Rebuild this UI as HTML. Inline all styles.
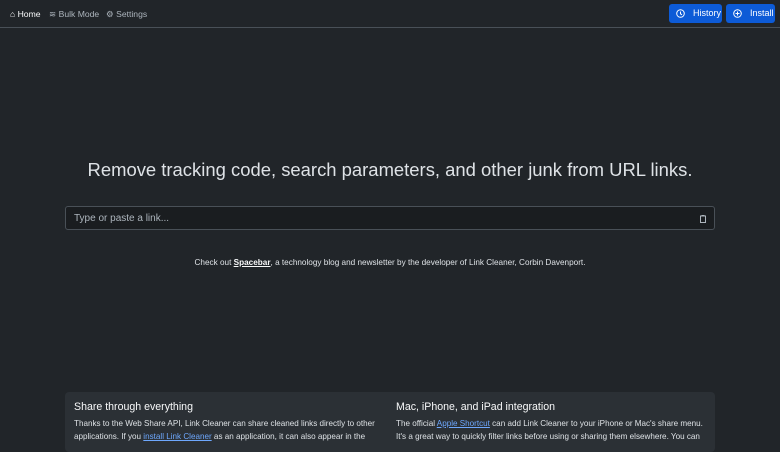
<!DOCTYPE html>
<html><head><meta charset="utf-8"><style>
*{box-sizing:border-box;margin:0;padding:0}
body{width:780px;height:438px;overflow:hidden;background:#212529;color:#dee2e6;font-family:"Liberation Sans",sans-serif;position:relative}
.nav{height:28px;border-bottom:1px solid #495057;background:#212529;position:relative}
.nav span{position:absolute;top:9px;font-size:8.6px;color:#adb5bd}
.btn{position:absolute;top:4px;height:19px;background:#0d5bd7;border-radius:3px;color:#fff;font-size:9px;line-height:19px;padding-left:24px}
.btn svg{position:absolute;left:7px;top:5px}
h1{position:absolute;top:159px;left:0;width:780px;text-align:center;font-weight:400;font-size:18.45px;color:#dee2e6}
.inp{position:absolute;left:65px;top:206px;width:650px;height:24px;background:#1a1d20;border:1px solid #495057;border-radius:3px;font-size:10px;color:#adb5bd;padding:6px 8px}
.note{position:absolute;top:258px;width:780px;text-align:center;font-size:8.2px;color:#dee2e6}
.card{position:absolute;left:65px;top:392px;width:650px;height:60px;background:#2b3035;border-radius:4px}
.col{position:absolute;top:9px;width:312px}
.col h3{font-size:10.6px;font-weight:400;color:#f8f9fa;margin-bottom:5px}
.col p{font-size:8.1px;line-height:12.5px;color:#dee2e6}
a{color:#6ea8fe;text-decoration:underline}
</style></head><body>
<div class="nav">
<span style="left:10px;color:#f8f9fa">⌂ Home</span>
<span style="left:49px">≋ Bulk Mode</span>
<span style="left:106px">⚙ Settings</span>
<div class="btn" style="left:669px;width:53px"><svg width="9" height="9"><circle cx="4.5" cy="4.5" r="3.8" fill="none" stroke="#fff" stroke-width="1"/><path d="M4.5 2.5V4.8L6 5.8" stroke="#fff" fill="none" stroke-width="1"/></svg>History</div>
<div class="btn" style="left:726px;width:49px"><svg width="9" height="9"><circle cx="4.5" cy="4.5" r="3.8" fill="none" stroke="#fff" stroke-width="1"/><path d="M4.5 2.5V6.5M2.5 4.5H6.5" stroke="#fff" stroke-width="1"/></svg>Install</div>
</div>
<h1>Remove tracking code, search parameters, and other junk from URL links.</h1>
<div class="inp">Type or paste a link...<svg style="position:absolute;right:8px;top:8px" width="6" height="8"><rect x="0.5" y="1" width="5" height="6.5" fill="none" stroke="#adb5bd" stroke-width="1"/><rect x="1.5" y="0" width="3" height="1.5" fill="#adb5bd"/></svg></div>
<div class="note">Check out <b style="text-decoration:underline;color:#f8f9fa">Spacebar</b>, a technology blog and newsletter by the developer of Link Cleaner, Corbin Davenport.</div>
<div class="card">
<div class="col" style="left:9px"><h3>Share through everything</h3><p>Thanks to the Web Share API, Link Cleaner can share cleaned links directly to other applications. If you <a>install Link Cleaner</a> as an application, it can also appear in the</p></div>
<div class="col" style="left:331px"><h3>Mac, iPhone, and iPad integration</h3><p>The official <a>Apple Shortcut</a> can add Link Cleaner to your iPhone or Mac's share menu. It's a great way to quickly filter links before using or sharing them elsewhere. You can</p></div>
</div>
</body></html>
